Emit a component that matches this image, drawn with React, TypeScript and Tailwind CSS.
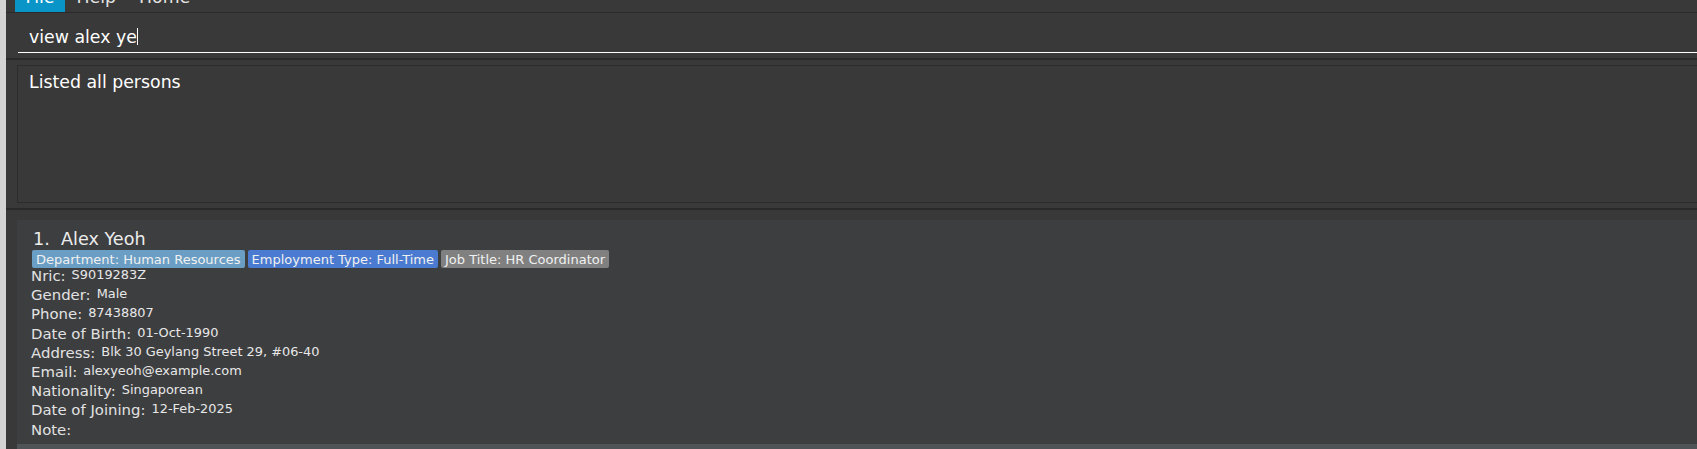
import React from "react"

const tags = [
    { text: "Department: Human Resources", color: "bg-[#6b9ec4]" },
    { text: "Employment Type: Full-Time", color: "bg-[#4a7bd0]" },
    { text: "Job Title: HR Coordinator", color: "bg-[#808080]" },
]

const fields: [string, string][] = [
    ["Nric:", "S9019283Z"],
    ["Gender:", "Male"],
    ["Phone:", "87438807"],
    ["Date of Birth:", "01-Oct-1990"],
    ["Address:", "Blk 30 Geylang Street 29, #06-40"],
    ["Email:", "alexyeoh@example.com"],
    ["Nationality:", "Singaporean"],
    ["Date of Joining:", "12-Feb-2025"],
    ["Note:", ""],
]

function MenuBar() {
    return (
        <div className="h-[31px] border-b border-[#2b2b2b] flex pl-[9px] text-[17.33px] leading-[30px]">
            <div className="px-[10.5px] bg-[#0a95c8] text-white">File</div>
            <div className="px-[11.5px] text-[#e4e4e4]">Help</div>
            <div className="px-[11.5px] text-[#e4e4e4]">Home</div>
        </div>
    )
}

function PersonCard() {
    return (
        <div className="bg-[#3d3e40] pt-[9px] pb-[5.4px] pl-[14px]">
            <div className="ml-[2px] text-[17.6px] leading-[20px] text-[#ececec] whitespace-pre">1.  Alex Yeoh</div>
            <div className="mt-[1px] ml-[1px] flex gap-[3px]">
                {tags.map((tag) => (
                    <span
                        key={tag.text}
                        className={`${tag.color} text-[#f0f0f0] text-[13px] leading-[15px] px-[4px] py-[1.5px] rounded-[2px]`}
                    >
                        {tag.text}
                    </span>
                ))}
            </div>
            <div className="flex flex-col gap-[2.2px]">
                {fields.map(([label, value]) => (
                    <div key={label} className="flex items-start gap-[6px]">
                        <span className="text-[14.9px] leading-[17px] text-[#e2e2e2]">{label}</span>
                        <span className="text-[12.9px] leading-[14.75px] text-[#e8e8e8]">{value}</span>
                    </div>
                ))}
            </div>
        </div>
    )
}

export default function App() {
    return (
        <div className="w-[1697px] h-[449px] overflow-hidden flex items-start bg-[#d4d4d4] font-['DejaVu_Sans',sans-serif]">
            <div className="w-[6px] shrink-0" />
            <div className="flex-1 -mt-[18px] min-h-[467px] bg-[#393939]">
                <MenuBar />

                {/* command box */}
                <div className="pl-[12px] pb-[5px]">
                    <div className="h-[40px] border-b border-white pt-[14px] pl-[11px] text-[17.33px] leading-[20px] text-white flex">
                        <span>view alex ye</span>
                        <span className="w-px h-[17px] mt-[1px] bg-white" />
                    </div>
                </div>
                <div className="h-[2px] bg-[#2a2a2a]" />

                {/* result display */}
                <div className="pl-[11px] pt-[5px] pb-[5px]">
                    <div className="h-[138px] border border-r-0 border-[#2c2c2c] pt-[6px] pl-[11px] text-[17.33px] leading-[20px] text-white">
                        Listed all persons
                    </div>
                </div>
                <div className="h-[2px] bg-[#2a2a2a]" />

                {/* person list */}
                <div className="pl-[11px] pt-[10px]">
                    <PersonCard />
                    <div className="h-[20px] bg-[#4f5456]" />
                </div>
            </div>
        </div>
    )
}
